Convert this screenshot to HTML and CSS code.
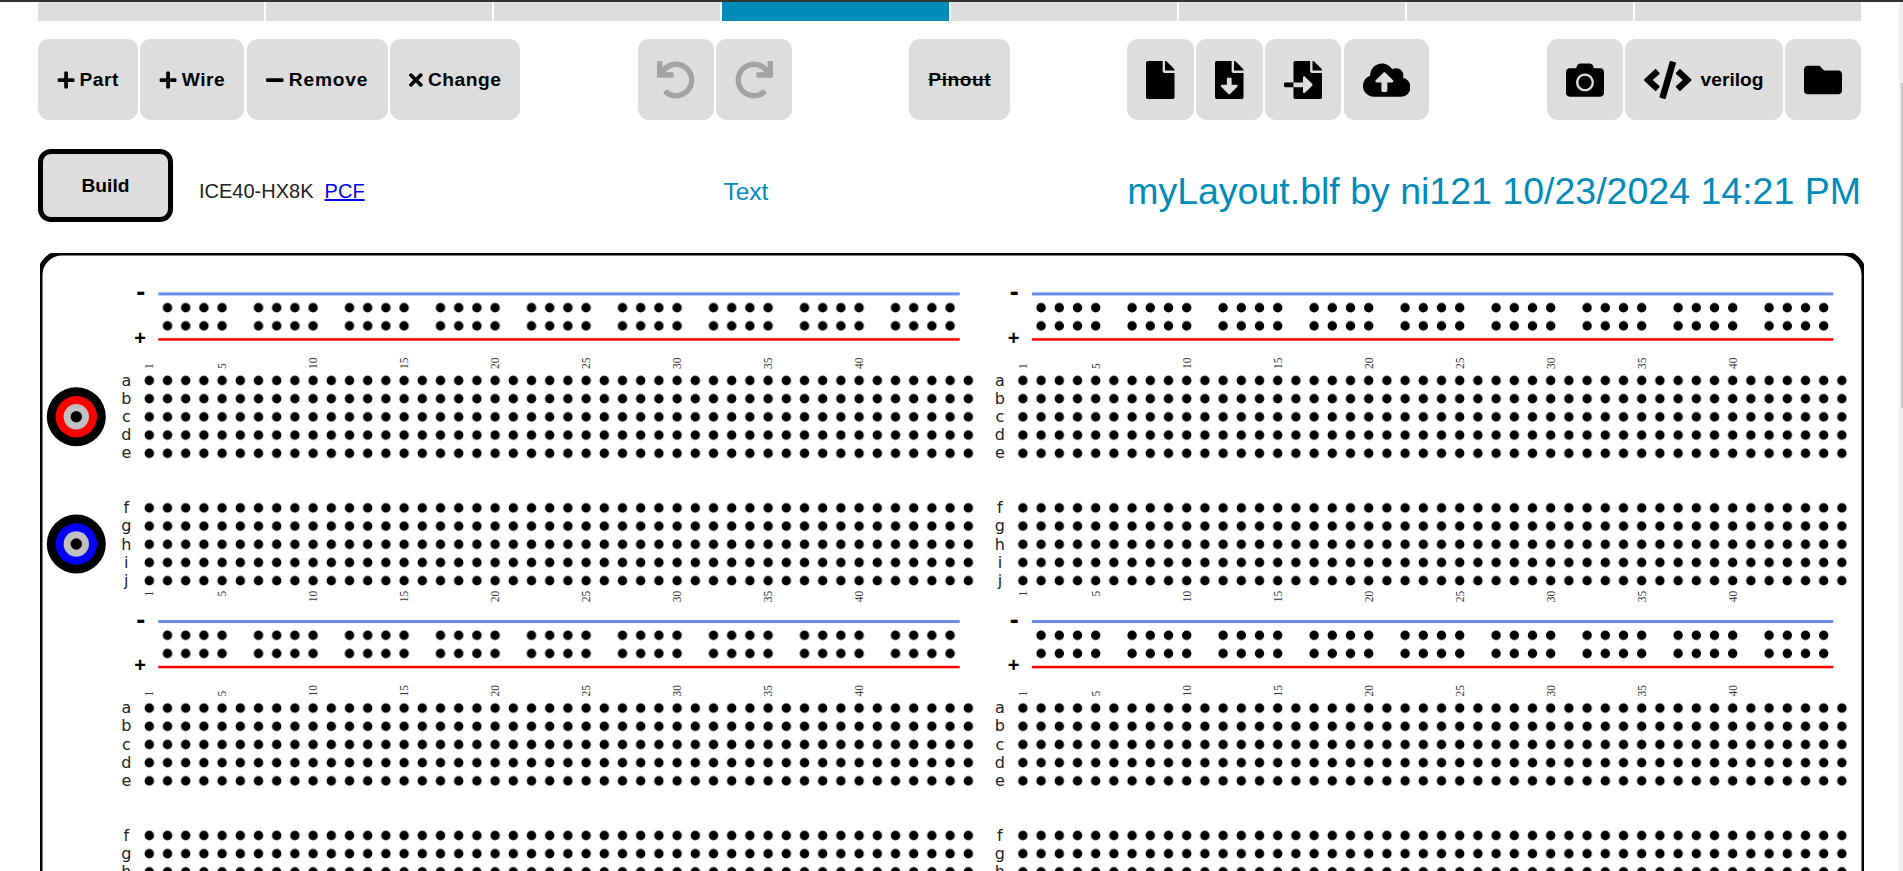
FILE: index.html
```html
<!DOCTYPE html>
<html lang="en">
<head>
  <meta charset="UTF-8" />
  <title>Breadboard Layout</title>
  <link rel="stylesheet" href="styles.css">
</head>
<body>
  <div class="top-bar"></div>
  <div class="main">
    <div class="page">
      <nav class="tabs">
        <a class="tab"></a>
        <a class="tab"></a>
        <a class="tab"></a>
        <a class="tab active"></a>
        <a class="tab"></a>
        <a class="tab"></a>
        <a class="tab"></a>
        <a class="tab"></a>
      </nav>

      <div class="toolbar">
        <div class="btn-group">
          <button class="tool-btn"><svg class="mini-icon" viewBox="0 0 448 512"><path d="M416 208H280V72c0-17.67-14.33-32-32-32h-32c-17.67 0-32 14.33-32 32v136H48c-17.67 0-32 14.33-32 32v32c0 17.67 14.33 32 32 32h136v136c0 17.67 14.33 32 32 32h32c17.67 0 32-14.33 32-32V304h136c17.67 0 32-14.33 32-32v-32c0-17.67-14.33-32-32-32z"/></svg>Part</button>
          <button class="tool-btn"><svg class="mini-icon" viewBox="0 0 448 512"><path d="M416 208H280V72c0-17.67-14.33-32-32-32h-32c-17.67 0-32 14.33-32 32v136H48c-17.67 0-32 14.33-32 32v32c0 17.67 14.33 32 32 32h136v136c0 17.67 14.33 32 32 32h32c17.67 0 32-14.33 32-32V304h136c17.67 0 32-14.33 32-32v-32c0-17.67-14.33-32-32-32z"/></svg>Wire</button>
          <button class="tool-btn remove"><svg class="mini-icon" viewBox="0 0 448 512"><path d="M416 208H32c-17.67 0-32 14.33-32 32v32c0 17.67 14.33 32 32 32h384c17.67 0 32-14.33 32-32v-32c0-17.67-14.33-32-32-32z"/></svg>Remove</button>
          <button class="tool-btn"><svg class="mini-icon" viewBox="0 0 352 512"><path d="M242.72 256l100.07-100.07c12.28-12.28 12.28-32.19 0-44.48l-22.24-22.24c-12.28-12.28-32.19-12.28-44.48 0L176 189.28 75.93 89.21c-12.28-12.28-32.19-12.28-44.48 0L9.21 111.45c-12.28 12.28-12.28 32.19 0 44.48L109.28 256 9.21 356.07c-12.28 12.28-12.28 32.19 0 44.48l22.24 22.24c12.28 12.28 32.2 12.28 44.48 0L176 322.72l100.07 100.07c12.28 12.28 32.2 12.28 44.48 0l22.24-22.24c12.28-12.28 12.28-32.19 0-44.48L242.72 256z"/></svg>Change</button>
        </div>

        <div class="btn-group">
          <button class="tool-btn disabled"><svg class="icon" viewBox="0 0 512 512"><path d="M212.333 224.333H12c-6.627 0-12-5.373-12-12V12C0 5.373 5.373 0 12 0h48c6.627 0 12 5.373 12 12v78.112C117.773 39.279 184.26 7.47 258.175 8.007c136.906.994 246.448 111.623 246.157 248.532C504.041 393.258 393.12 504 256.333 504c-64.089 0-122.496-24.313-166.51-64.215-5.099-4.622-5.334-12.554-.467-17.42l33.967-33.967c4.474-4.474 11.662-4.717 16.401-.525C170.76 415.336 211.58 432 256.333 432c97.268 0 176-78.716 176-176 0-97.267-78.716-176-176-176-58.496 0-110.28 28.476-142.274 72.333h98.274c6.627 0 12 5.373 12 12v48c0 6.627-5.373 12-12 12z"/></svg></button>
          <button class="tool-btn disabled"><svg class="icon flip" viewBox="0 0 512 512"><path d="M212.333 224.333H12c-6.627 0-12-5.373-12-12V12C0 5.373 5.373 0 12 0h48c6.627 0 12 5.373 12 12v78.112C117.773 39.279 184.26 7.47 258.175 8.007c136.906.994 246.448 111.623 246.157 248.532C504.041 393.258 393.12 504 256.333 504c-64.089 0-122.496-24.313-166.51-64.215-5.099-4.622-5.334-12.554-.467-17.42l33.967-33.967c4.474-4.474 11.662-4.717 16.401-.525C170.76 415.336 211.58 432 256.333 432c97.268 0 176-78.716 176-176 0-97.267-78.716-176-176-176-58.496 0-110.28 28.476-142.274 72.333h98.274c6.627 0 12 5.373 12 12v48c0 6.627-5.373 12-12 12z"/></svg></button>
        </div>

        <div class="btn-group">
          <button class="tool-btn pinout"><s>Pinout</s></button>
        </div>

        <div class="btn-group">
          <button class="tool-btn"><svg class="icon" viewBox="0 0 384 512"><path d="M224 136V0H24C10.7 0 0 10.7 0 24v464c0 13.3 10.7 24 24 24h336c13.3 0 24-10.7 24-24V160H248c-13.2 0-24-10.8-24-24zm160-14.1v6.1H256V0h6.1c6.4 0 12.5 2.5 17 7l97.9 98c4.5 4.5 7 10.6 7 16.9z"/></svg></button>
          <button class="tool-btn"><svg class="icon" viewBox="0 0 384 512"><path d="M224 136V0H24C10.7 0 0 10.7 0 24v464c0 13.3 10.7 24 24 24h336c13.3 0 24-10.7 24-24V160H248c-13.2 0-24-10.8-24-24zm76.45 211.36l-96.42 95.7c-6.65 6.61-17.39 6.61-24.04 0l-96.42-95.7C73.42 337.29 80.54 320 94.82 320H160v-80c0-8.84 7.16-16 16-16h32c8.84 0 16 7.16 16 16v80h65.18c14.28 0 21.4 17.29 11.27 27.36zM377 105L279.1 7c-4.5-4.5-10.6-7-17-7H256v128h128v-6.1c0-6.3-2.5-12.4-7-16.9z"/></svg></button>
          <button class="tool-btn"><svg class="icon" viewBox="0 0 512 512"><path d="M16 288c-8.8 0-16 7.2-16 16v32c0 8.8 7.2 16 16 16h112v-64zm489-183L407.1 7c-4.5-4.5-10.6-7-17-7H384v128h128v-6.1c0-6.3-2.5-12.4-7-16.9zm-153 31V0H152c-13.3 0-24 10.7-24 24v264h128v-65.2c0-14.3 17.3-21.4 27.4-11.3L379 308c6.6 6.7 6.6 17.4 0 24l-95.7 96.4c-10.1 10.1-27.4 3-27.4-11.3V352H128v136c0 13.3 10.7 24 24 24h336c13.3 0 24-10.7 24-24V160H376c-13.2 0-24-10.8-24-24z"/></svg></button>
          <button class="tool-btn"><svg class="icon" viewBox="0 0 640 512"><path d="M537.6 226.6c4.1-10.7 6.4-22.4 6.4-34.6 0-53-43-96-96-96-19.7 0-38.1 6-53.3 16.2C367 64.2 315.3 32 256 32c-88.4 0-160 71.6-160 160 0 2.7.1 5.4.2 8.1C40.2 219.8 0 273.2 0 336c0 79.5 64.5 144 144 144h368c70.7 0 128-57.3 128-128 0-61.9-44-113.6-102.4-125.4zM393.4 288H328v112c0 8.8-7.2 16-16 16h-48c-8.8 0-16-7.2-16-16V288h-65.4c-14.3 0-21.4-17.2-11.3-27.3l105.4-105.4c6.2-6.2 16.4-6.2 22.6 0l105.4 105.4c10.1 10.1 3 27.3-11.3 27.3z"/></svg></button>
        </div>

        <div class="btn-group">
          <button class="tool-btn"><svg class="icon" viewBox="0 0 512 512"><path d="M512 144v288c0 26.5-21.5 48-48 48H48c-26.5 0-48-21.5-48-48V144c0-26.5 21.5-48 48-48h88l12.3-32.9c7-18.7 24.9-31.1 44.9-31.1h125.5c20 0 37.9 12.4 44.9 31.1L376 96h88c26.5 0 48 21.5 48 48zM376 288c0-66.2-53.8-120-120-120s-120 53.8-120 120 53.8 120 120 120 120-53.8 120-120zm-32 0c0 48.5-39.5 88-88 88s-88-39.5-88-88 39.5-88 88-88 88 39.5 88 88z"/></svg></button>
          <button class="tool-btn verilog"><svg class="icon" viewBox="0 0 640 512"><path d="M278.9 511.5l-61-17.7c-6.4-1.8-10-8.5-8.2-14.9L346.2 8.7c1.8-6.4 8.5-10 14.9-8.2l61 17.7c6.4 1.8 10 8.5 8.2 14.9L293.8 503.3c-1.9 6.4-8.5 10.1-14.9 8.2zm-114-112.2l43.5-46.4c4.6-4.9 4.3-12.7-.8-17.2L117 256l90.6-79.7c5.1-4.5 5.5-12.3.8-17.2l-43.5-46.4c-4.5-4.8-12.1-5.1-17-.5L3.8 247.2c-5.1 4.7-5.1 12.8 0 17.5l144.1 135.1c4.9 4.6 12.5 4.4 17-.5zm327.2.6l144.1-135.1c5.1-4.7 5.1-12.8 0-17.5L492.1 112.1c-4.8-4.5-12.4-4.3-17 .5L431.6 159c-4.6 4.9-4.3 12.7.8 17.2L523 256l-90.6 79.7c-5.1 4.5-5.5 12.3-.8 17.2l43.5 46.4c4.5 4.9 12.1 5.1 17 .6z"/></svg>verilog</button>
          <button class="tool-btn"><svg class="icon" viewBox="0 0 512 512"><path d="M464 128H272l-64-64H48C21.49 64 0 85.49 0 112v288c0 26.51 21.49 48 48 48h416c26.51 0 48-21.49 48-48V176c0-26.51-21.49-48-48-48z"/></svg></button>
        </div>
      </div>

      <div class="status-row">
        <div class="build-info">
          <button class="build-btn">Build</button>
          <span class="chip-name">ICE40-HX8K&nbsp; <a href="#">PCF</a></span>
        </div>
        <span class="status-link">Text</span>
        <span class="layout-title">myLayout.blf by ni121 10/23/2024 14:21 PM</span>
      </div>

      <svg class="board" width="1824" height="618" viewBox="0 0 1824 618">
        <defs>
          <pattern id="term-holes" width="18.2" height="18.2" patternUnits="userSpaceOnUse">
            <circle cx="9.1" cy="9.1" r="4.7"/>
          </pattern>
          <pattern id="rail-holes" width="91" height="18.2" patternUnits="userSpaceOnUse">
            <circle cx="9.1" cy="9.1" r="4.7"/>
            <circle cx="27.3" cy="9.1" r="4.7"/>
            <circle cx="45.5" cy="9.1" r="4.7"/>
            <circle cx="63.7" cy="9.1" r="4.7"/>
          </pattern>

          <!-- one section of a breadboard, origin on the first rail hole row / column 1 -->
          <g id="section">
            <rect class="rail-blue" x="9" y="-15.3" width="801.4" height="3"/>
            <rect class="rail-red" x="9" y="30.5" width="801.4" height="2.5"/>
            <text class="rail-minus" x="-8.6" y="-6.6">-</text>
            <text class="rail-plus" x="-9.3" y="37">+</text>

            <g transform="translate(9.1 -9.1)"><rect width="819" height="36.4" fill="url(#rail-holes)"/></g>
            <g transform="translate(-9.1 63.7)"><rect width="837.2" height="91" fill="url(#term-holes)"/></g>
            <g transform="translate(-9.1 191.1)"><rect width="837.2" height="91" fill="url(#term-holes)"/></g>

            <text class="row-letter" x="-23" y="77.9">a</text>
            <text class="row-letter" x="-23" y="96.1">b</text>
            <text class="row-letter" x="-23" y="114.3">c</text>
            <text class="row-letter" x="-23" y="132.5">d</text>
            <text class="row-letter" x="-23" y="150.7">e</text>
            <text class="row-letter" x="-23" y="205.5">f</text>
            <text class="row-letter" x="-23" y="223.7">g</text>
            <text class="row-letter" x="-23" y="241.9">h</text>
            <text class="row-letter" x="-23" y="260.1">i</text>
            <text class="row-letter" x="-23" y="278.3">j</text>

            <text class="col-num" transform="translate(4 61.3) rotate(-90)">1</text>
            <text class="col-num" transform="translate(76.8 61.3) rotate(-90)">5</text>
            <text class="col-num" transform="translate(167.8 61.3) rotate(-90)">10</text>
            <text class="col-num" transform="translate(258.8 61.3) rotate(-90)">15</text>
            <text class="col-num" transform="translate(349.8 61.3) rotate(-90)">20</text>
            <text class="col-num" transform="translate(440.8 61.3) rotate(-90)">25</text>
            <text class="col-num" transform="translate(531.8 61.3) rotate(-90)">30</text>
            <text class="col-num" transform="translate(622.8 61.3) rotate(-90)">35</text>
            <text class="col-num" transform="translate(713.8 61.3) rotate(-90)">40</text>

            <text class="col-num end" transform="translate(4 283) rotate(-90)">1</text>
            <text class="col-num end" transform="translate(76.8 283) rotate(-90)">5</text>
            <text class="col-num end" transform="translate(167.8 283) rotate(-90)">10</text>
            <text class="col-num end" transform="translate(258.8 283) rotate(-90)">15</text>
            <text class="col-num end" transform="translate(349.8 283) rotate(-90)">20</text>
            <text class="col-num end" transform="translate(440.8 283) rotate(-90)">25</text>
            <text class="col-num end" transform="translate(531.8 283) rotate(-90)">30</text>
            <text class="col-num end" transform="translate(622.8 283) rotate(-90)">35</text>
            <text class="col-num end" transform="translate(713.8 283) rotate(-90)">40</text>
          </g>
        </defs>

        <rect class="board-outline" x="0" y="0" width="1824" height="1000" rx="22"/>

        <use href="#section" x="109.3" y="54.7"/>
        <use href="#section" x="982.9" y="54.7"/>
        <use href="#section" x="109.3" y="382.3"/>
        <use href="#section" x="982.9" y="382.3"/>

        <!-- power jacks -->
        <circle cx="36.3" cy="163.7" r="29.5"/>
        <circle cx="36.3" cy="163.7" r="20.7" fill="#ff0000"/>
        <circle cx="36.3" cy="163.7" r="12.7" fill="#c0c0c0"/>
        <circle cx="36.3" cy="163.7" r="5.7"/>

        <circle cx="36.3" cy="291" r="29.5"/>
        <circle cx="36.3" cy="291" r="20.7" fill="#0000ff"/>
        <circle cx="36.3" cy="291" r="12.7" fill="#c0c0c0"/>
        <circle cx="36.3" cy="291" r="5.7"/>
      </svg>
    </div>

    <div class="scroll-track"><div class="scroll-thumb"></div></div>
  </div>
</body>
</html>
```

FILE: styles.css
```css
* {
  box-sizing: border-box;
}
html, body {
  height: 100%;
  overflow: hidden;
}
body {
  margin: 0;
  display: flex;
  flex-direction: column;
  font-family: "Liberation Sans", Arial, sans-serif;
  background: white;
  color: #000;
}
.top-bar {
  height: 2px;
  flex: none;
  background: #333;
}
.main {
  flex: 1;
  min-height: 0;
  display: flex;
}
.page {
  flex: 1;
  min-width: 0;
  padding: 0 38px;
  overflow: hidden;
}
.scroll-track {
  width: 4px;
  flex: none;
  background: #f1f1f1;
}
.scroll-thumb {
  width: 2px;
  height: 325px;
  margin: 81px 0 0 2px;
  background: #c8c8c8;
}

.tabs {
  display: flex;
  gap: 2px;
  height: 19px;
}
.tab {
  flex: 1;
  background: #ddd;
}
.tab.active {
  background: #008cba;
}

.toolbar {
  display: flex;
  justify-content: space-between;
  margin-top: 18px;
}
.btn-group {
  display: flex;
  gap: 2.5px;
}
.tool-btn {
  display: flex;
  align-items: center;
  gap: 5px;
  height: 81px;
  padding: 0 19px;
  border: none;
  border-radius: 11px;
  background: #ddd;
  color: #000;
  font-family: inherit;
  font-size: 19.2px;
  font-weight: bold;
  letter-spacing: 0.5px;
  white-space: nowrap;
}
.tool-btn.disabled {
  color: #a3a3a3;
}
.tool-btn.pinout {
  padding: 0 19px;
}
.tool-btn.remove {
  letter-spacing: 0.8px;
  padding: 0 19.5px;
}
.tool-btn.verilog {
  gap: 9px;
  letter-spacing: 0;
}
.icon {
  height: 38px;
  fill: currentColor;
  flex: none;
}
.icon.flip {
  transform: scaleX(-1);
}
.mini-icon {
  height: 20px;
  fill: currentColor;
  flex: none;
}

.status-row {
  display: flex;
  justify-content: space-between;
  align-items: center;
  margin-top: 29px;
  height: 73px;
}
.build-info {
  display: flex;
  align-items: center;
  gap: 26px;
}
.build-btn {
  width: 135px;
  height: 73px;
  border: 5px solid #000;
  border-radius: 13px;
  background: #ddd;
  color: #000;
  font-family: inherit;
  font-size: 19.2px;
  font-weight: bold;
}
.chip-name {
  margin-top: 12px;
  font-size: 20px;
  color: #222;
}
.chip-name a {
  color: #0000ee;
}
.status-link {
  margin-top: 12px;
  font-size: 24.5px;
  color: #008cba;
}
.layout-title {
  margin-top: 12px;
  font-size: 37.5px;
  color: #008cba;
}

.board {
  display: block;
  margin: 31px 0 0 2px;
}
.board-outline {
  fill: white;
  stroke: #000;
  stroke-width: 5;
}
.rail-blue {
  fill: #6d8bea;
}
.rail-red {
  fill: #ff0000;
}
.rail-minus, .rail-plus {
  font-family: "Liberation Sans", sans-serif;
  font-weight: bold;
  text-anchor: middle;
}
.rail-minus {
  font-size: 27px;
}
.rail-plus {
  font-size: 20px;
}
.row-letter {
  font-family: "DejaVu Sans", sans-serif;
  font-size: 16px;
  text-anchor: middle;
  fill: #222;
}
.col-num {
  font-family: "Liberation Serif", serif;
  font-size: 11.5px;
  fill: #333;
}
.col-num.end {
  text-anchor: end;
}
```
